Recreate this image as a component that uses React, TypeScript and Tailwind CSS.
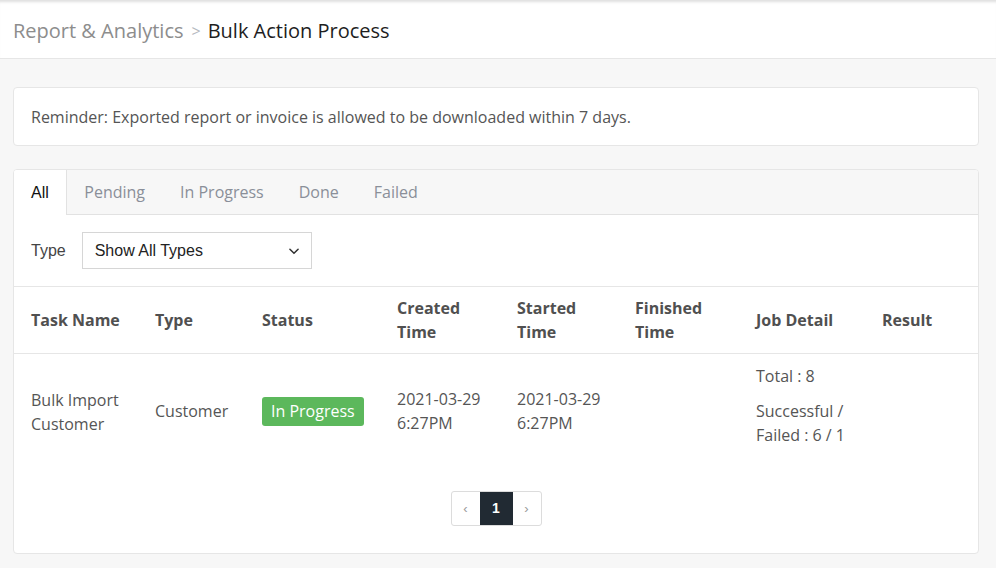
import React from 'react';

const tabs = ['All', 'Pending', 'In Progress', 'Done', 'Failed'];

const columns = [
  ['Task Name'],
  ['Type'],
  ['Status'],
  ['Created', 'Time'],
  ['Started', 'Time'],
  ['Finished', 'Time'],
  ['Job Detail'],
  ['Result'],
];

const gridCols = 'grid grid-cols-[124px_107px_135px_120px_118px_121px_126px_1fr]';

export default function App() {
  const sans = { fontFamily: '"Open Sans", "Noto Sans", sans-serif' };
  const arial = { fontFamily: '"Liberation Sans", Arial, sans-serif' };

  return (
    <div className="min-h-[568px] bg-[#f7f7f7] text-[#555]" style={sans}>
      {/* breadcrumb header */}
      <div className="h-[59px] bg-white border-b border-[#e6e6e6] shadow-[inset_0_4px_3px_-2px_rgba(0,0,0,0.13)] flex items-center pl-[13px] pt-[4px] text-[20px]">
        <span className="text-[#8d8d8d]">Report &amp; Analytics</span>
        <span className="text-[#b5b9c0] text-[16px] ml-[8px] mr-[7px]">&gt;</span>
        <span className="text-[#1e1e1e]">Bulk Action Process</span>
      </div>

      <div className="pl-[13px] pr-[17px] pt-[28px] pb-[15px]">
        {/* reminder */}
        <div className="h-[59px] bg-white border border-[#e6e6e6] rounded-[4px] flex items-center px-[17px] text-[16px]">
          Reminder: Exported report or invoice is allowed to be downloaded within 7 days.
        </div>

        {/* jobs card */}
        <div className="mt-[23px] bg-white border border-[#e6e6e6] rounded-[4px] overflow-hidden">
          <div className="flex h-[45px] bg-[#f7f7f7] border-b border-[#e2e2e2]">
            {tabs.map((t, i) =>
              i === 0 ? (
                <div
                  key={t}
                  className="bg-white border-r border-[#e2e2e2] -mb-px px-[17px] flex items-center text-[16px] text-[#111]"
                  style={arial}
                >
                  {t}
                </div>
              ) : (
                <div key={t} className="px-[17.5px] flex items-center text-[16px] text-[#8a8f99]">
                  {t}
                </div>
              )
            )}
          </div>

          <div className="h-[72px] flex items-center pl-[17px] border-b border-[#e6e6e6]" style={arial}>
            <span className="text-[16px] text-[#444] mr-[16px]">Type</span>
            <div className="w-[230px] h-[37px] border border-[#d6d6d6] flex items-center justify-between pl-[12px] pr-[10px] text-[16px] text-[#222]">
              <span>Show All Types</span>
              <svg width="14" height="14" viewBox="0 0 24 24" fill="none" stroke="#333" strokeWidth="2.6" strokeLinecap="round" strokeLinejoin="round">
                <path d="M5 9l7 7 7-7" />
              </svg>
            </div>
          </div>

          {/* table header */}
          <div className={`${gridCols} h-[67px] border-b border-[#e6e6e6] items-center text-[16px] font-bold text-[#505050] leading-[24px]`}>
            {columns.map((c) => (
              <div key={c.join(' ')} className="pl-[17px]">
                {c.map((l) => (
                  <div key={l}>{l}</div>
                ))}
              </div>
            ))}
          </div>

          {/* row */}
          <div className={`${gridCols} items-center py-[10px] text-[16px] leading-[24px]`}>
            <div className="pl-[17px] pt-[2px]">
              <div>Bulk Import</div>
              <div>Customer</div>
            </div>
            <div className="pl-[17px]">Customer</div>
            <div className="pl-[17px]">
              <span className="inline-flex items-center h-[29px] px-[9px] rounded-[3px] bg-[#5cb85c] text-white">
                In Progress
              </span>
            </div>
            <div className="pl-[17px]">
              <div>2021-03-29</div>
              <div>6:27PM</div>
            </div>
            <div className="pl-[17px]">
              <div>2021-03-29</div>
              <div>6:27PM</div>
            </div>
            <div className="pl-[17px]" />
            <div className="pl-[17px]">
              <p className="mb-[11px]">Total : 8</p>
              <p className="mb-[11px]">
                Successful /<br />
                Failed : 6 / 1
              </p>
            </div>
            <div className="pl-[17px]" />
          </div>

          {/* pagination */}
          <div className="flex justify-center mt-[23px] mb-[27px]" style={arial}>
            <div className="flex h-[35px] border border-[#dcdcdc] rounded-[3px] overflow-hidden text-[13px]">
              <div className="w-[28px] flex items-center justify-center text-[#999]">‹</div>
              <div className="w-[33px] flex items-center justify-center bg-[#212a33] text-white font-bold text-[14px]">1</div>
              <div className="w-[28px] flex items-center justify-center text-[#999]">›</div>
            </div>
          </div>
        </div>
      </div>
    </div>
  );
}
